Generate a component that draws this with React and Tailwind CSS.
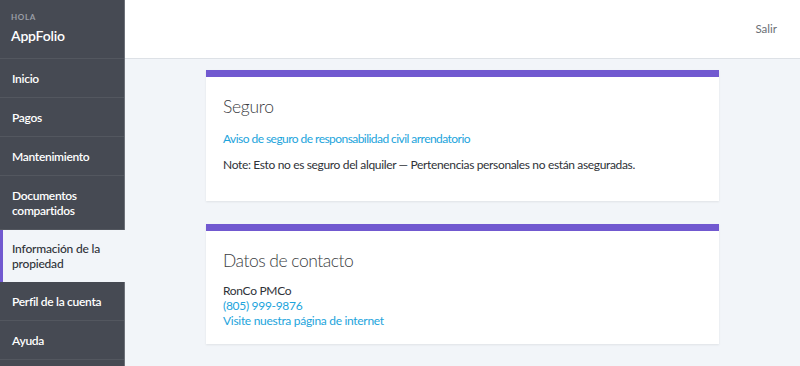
import React from "react";

const items = [
  { label: "Inicio" },
  { label: "Pagos" },
  { label: "Mantenimiento" },
  { label: "Documentos compartidos", two: true },
  { label: "Información de la propiedad", two: true, active: true },
  { label: "Perfil de la cuenta" },
  { label: "Ayuda" },
];

function Card({ children }) {
  return (
    <div className="bg-white border-t-[7px] border-[#7159d0] shadow-[0_1px_2px_rgba(0,0,0,0.08)] px-[17px] pt-[18px]">
      {children}
    </div>
  );
}

export default function App() {
  return (
    <div
      className="flex w-[800px] h-[366px] overflow-hidden bg-[#f2f5f9]"
      style={{ fontFamily: "Lato, 'Open Sans', sans-serif" }}
    >
      <aside className="w-[125px] shrink-0 bg-[#464a53] border-r border-[#6d7179] flex flex-col">
        <div className="h-[59px] border-b border-[#53575f] px-[11px] pt-[12px]">
          <div className="text-[8px] font-bold tracking-[0.08em] text-[#9a9ea6] leading-[10px]">HOLA</div>
          <div className="text-[14px] font-semibold text-white leading-[18px] mt-[5px] tracking-[-0.2px]">AppFolio</div>
        </div>
        {items.map((it) =>
          it.active ? (
            <div
              key={it.label}
              className="h-[52px] bg-[#f2f5f9] border-l-[3px] border-[#7159d0] -mr-px pl-[9px] pr-2 flex items-center text-[12px] font-medium leading-[15px] tracking-[-0.2px] text-[#2f3238]"
            >
              {it.label}
            </div>
          ) : (
            <div
              key={it.label}
              className={`${it.two ? "h-[54px]" : "h-[39px]"} border-b border-[#53575f] px-[12px] flex items-center text-[12px] font-semibold leading-[15px] tracking-[-0.3px] text-white`}
            >
              {it.label}
            </div>
          )
        )}
      </aside>
      <div className="flex-1 flex flex-col">
        <header className="h-[59px] bg-white border-b border-[#dde1e6] flex items-center justify-end pr-[23px] shrink-0">
          <span className="text-[11.5px] text-[#6b6f76]">Salir</span>
        </header>
        <main className="ml-[81px] w-[513px] pt-[11px] flex flex-col gap-[23px]">
          <Card>
            <h2 className="text-[17.5px] font-light text-[#3a3d42] leading-[24px] tracking-[-0.3px]">Seguro</h2>
            <a className="block mt-[12px] text-[12px] tracking-[-0.55px] text-[#1ca4dc] leading-[16px]">
              Aviso de seguro de responsabilidad civil arrendatorio
            </a>
            <p className="mt-[10px] pb-[28px] text-[12px] tracking-[-0.35px] text-[#2f3238] leading-[16px]">
              Note: Esto no es seguro del alquiler — Pertenencias personales no están aseguradas.
            </p>
          </Card>
          <Card>
            <h2 className="text-[17.5px] font-light text-[#3a3d42] leading-[24px] tracking-[-0.5px]">Datos de contacto</h2>
            <div className="mt-[10px] pb-[16px] text-[12px] tracking-[-0.3px] leading-[15px]">
              <div className="text-[#2f3238] font-normal">RonCo PMCo</div>
              <div className="text-[#1ca4dc]">(805) 999-9876</div>
              <div className="text-[#1ca4dc]">Visite nuestra página de internet</div>
            </div>
          </Card>
        </main>
      </div>
    </div>
  );
}
